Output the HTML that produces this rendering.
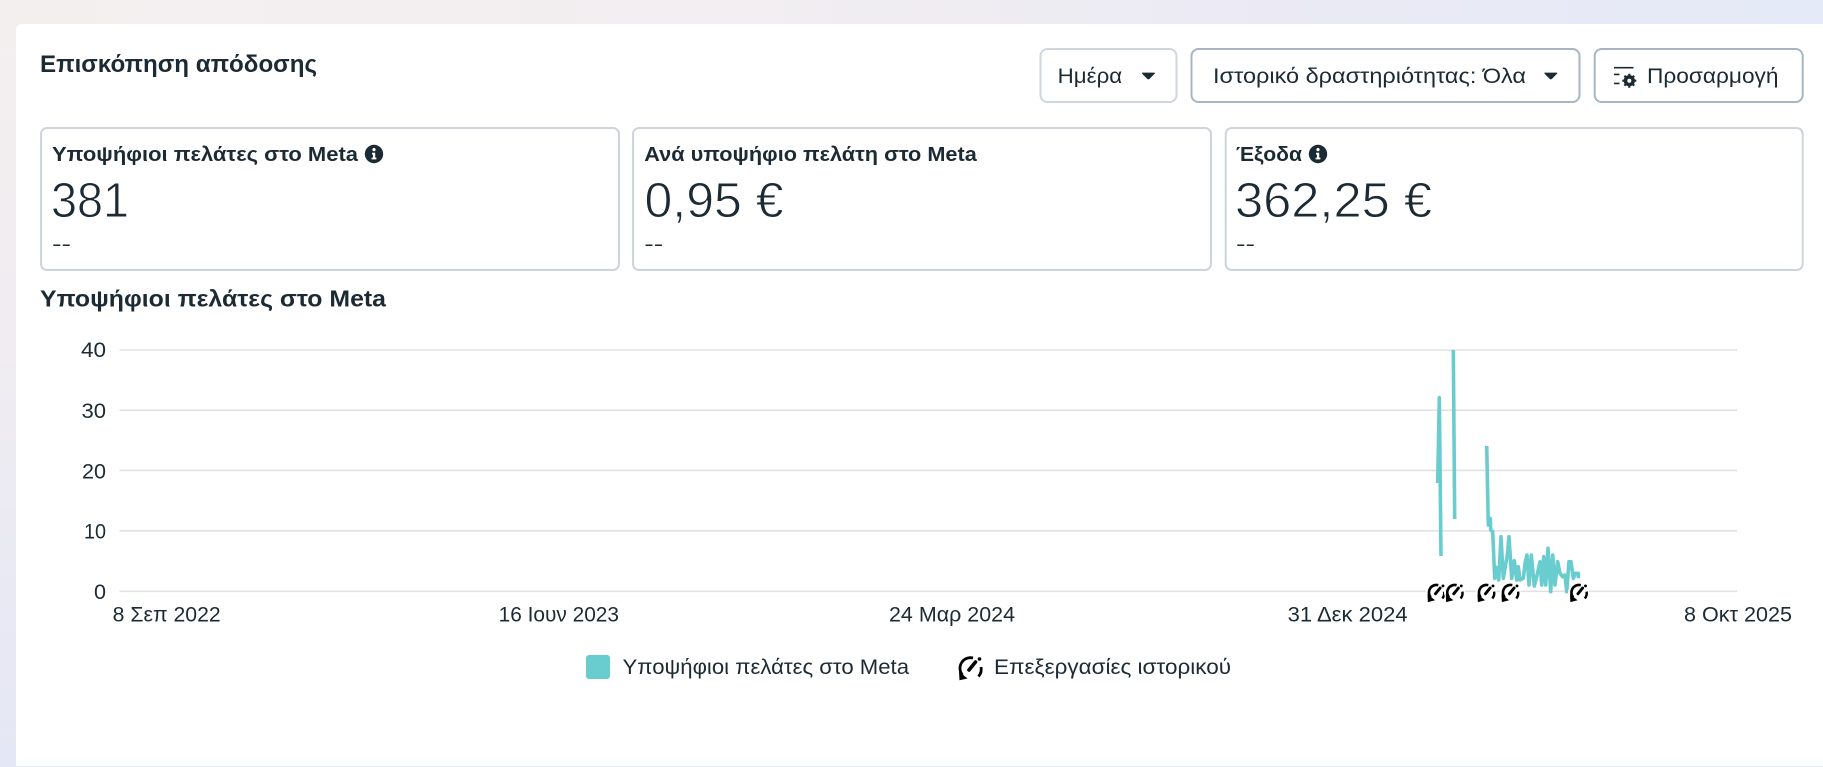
<!DOCTYPE html>
<html lang="el">
<head>
<meta charset="utf-8">
<title>Επισκόπηση απόδοσης</title>
<style>
html,body{margin:0;padding:0;width:1823px;height:767px;overflow:hidden;background:#fff}
svg{display:block}
text{font-family:"Liberation Sans","DejaVu Sans",sans-serif;fill:#1c2b33}
.b{font-weight:bold}
.lab{font-size:20px;font-weight:bold}
.val{font-size:49px;stroke:#fff;stroke-width:.9px}
.btn{font-size:21px}
.ax{font-size:21px}
.gr{stroke:#e0e2e5;stroke-width:1.6}
</style>
</head>
<body>
<svg width="1823" height="767" viewBox="0 0 1823 767" xmlns="http://www.w3.org/2000/svg">
<defs>
<linearGradient id="top" x1="0" y1="0" x2="1" y2="0">
<stop offset="0" stop-color="#f4efef"/><stop offset=".4" stop-color="#f2eef1"/><stop offset=".7" stop-color="#ebeaf4"/><stop offset="1" stop-color="#e4eaf7"/>
</linearGradient>
<linearGradient id="left" x1="0" y1="0" x2="0" y2="1">
<stop offset="0" stop-color="#f4efef"/><stop offset=".45" stop-color="#f0ecf1"/><stop offset="1" stop-color="#e4e7f5"/>
</linearGradient>
<g id="gauge" fill="none" stroke="#000">
<path d="M4.5 20A10.5 10.5 0 0 1 15 3" stroke-width="2.8"/>
<path d="M23 12A11 11 0 0 1 20.5 21.5" stroke-width="2.8"/>
<path d="M11 15L17.5 7" stroke-width="3.6" stroke-linecap="round"/>
<circle cx="21.5" cy="4" r="1.8" fill="#000" stroke="none"/>
<path d="M1 16.5L9.5 23.5L1.5 25.2Z" fill="#000" stroke="none"/>
</g>
<g id="mk" fill="none" stroke="#000">
<circle cx="12" cy="13" r="14.5" fill="#fff" stroke="none"/>
<path d="M4.5 20A10.5 10.5 0 0 1 15 3" stroke-width="3.6"/>
<path d="M23 12A11 11 0 0 1 20.5 21.5" stroke-width="3.4"/>
<path d="M11 15L17.5 7" stroke-width="4" stroke-linecap="round"/>
<circle cx="21.5" cy="4" r="2" fill="#000" stroke="none"/>
<path d="M0 15.5L10.5 24L0.5 26.5Z" fill="#000" stroke="none"/>
</g>
<g id="info">
<circle cx="0" cy="0" r="9.2" fill="#1c2b33"/>
<circle cx="0" cy="-4.4" r="1.6" fill="#fff"/>
<path d="M-2 -1.2H1.2V3.6H2.4V5.4H-2.4V3.6H-1V.6H-2Z" fill="#fff"/>
</g>
</defs>

<rect width="1823" height="767" fill="url(#top)"/>
<rect width="16" height="767" fill="url(#left)"/>
<path d="M16 767V30a6 6 0 0 1 6-6H1823V767Z" fill="#e5e9f2"/>
<path d="M16 766V30a6 6 0 0 1 6-6H1823V766Z" fill="#fff"/>

<text class="b" x="40" y="72" font-size="24" textLength="277" lengthAdjust="spacingAndGlyphs">Επισκόπηση απόδοσης</text>

<!-- Buttons -->
<rect x="1040.5" y="49" width="136" height="53" rx="7" fill="#fff" stroke="#d0d6de" stroke-width="2"/>
<text class="btn" x="1057.7" y="83" textLength="64.5" lengthAdjust="spacingAndGlyphs">Ημέρα</text>
<path d="M1142.6 72.6H1154.2Q1155.4 72.6 1154.6 73.8L1149.4 79Q1148.4 79.8 1147.4 79L1142.2 73.8Q1141.4 72.6 1142.6 72.6Z" fill="#1c2b33"/>

<rect x="1191.5" y="49" width="388" height="53" rx="7" fill="#fff" stroke="#a9b5c2" stroke-width="2"/>
<text class="btn" x="1213" y="83" textLength="313" lengthAdjust="spacingAndGlyphs">Ιστορικό δραστηριότητας: Όλα</text>
<path d="M1545 72.6H1556.6Q1557.8 72.6 1557 73.8L1551.8 79Q1550.8 79.8 1549.8 79L1544.6 73.8Q1543.8 72.6 1545 72.6Z" fill="#1c2b33"/>

<rect x="1594.7" y="49" width="208" height="53" rx="7" fill="#fff" stroke="#a9b5c2" stroke-width="2"/>
<g fill="none" stroke="#1c2b33" stroke-width="1.6">
<path d="M1614 67.7H1633.5M1614 74.4H1619.5M1614 83.4H1619.5"/>
<circle cx="1629.3" cy="80.7" r="4" stroke-width="3.2"/>
<path d="M1629.3 73.7V87.7M1622.3 80.7H1636.3M1624.4 75.8L1634.2 85.6M1634.2 75.8L1624.4 85.6" stroke-width="2.2"/>
</g>
<circle cx="1629.3" cy="80.7" r="2" fill="#fff"/>
<text class="btn" x="1647" y="83" textLength="131.5" lengthAdjust="spacingAndGlyphs">Προσαρμογή</text>

<!-- Metric cards -->
<rect x="41" y="128" width="578" height="142" rx="6" fill="#fff" stroke="#ced4dc" stroke-width="2"/>
<text class="lab" x="52" y="161" textLength="306" lengthAdjust="spacingAndGlyphs">Υποψήφιοι πελάτες στο Meta</text>
<use href="#info" x="374" y="154"/>
<text class="val" x="51" y="217" textLength="78" lengthAdjust="spacingAndGlyphs">381</text>
<text x="52" y="250.5" font-size="19" textLength="19" lengthAdjust="spacingAndGlyphs">--</text>

<rect x="633" y="128" width="578" height="142" rx="6" fill="#fff" stroke="#ced4dc" stroke-width="2"/>
<text class="lab" x="644.3" y="161" textLength="332.5" lengthAdjust="spacingAndGlyphs">Ανά υποψήφιο πελάτη στο Meta</text>
<text class="val" x="644.5" y="217" textLength="139" lengthAdjust="spacingAndGlyphs">0,95 €</text>
<text x="644.3" y="250.5" font-size="19" textLength="19" lengthAdjust="spacingAndGlyphs">--</text>

<rect x="1225.7" y="128" width="577" height="142" rx="6" fill="#fff" stroke="#ced4dc" stroke-width="2"/>
<text class="lab" x="1236" y="161" textLength="66" lengthAdjust="spacingAndGlyphs">Έξοδα</text>
<use href="#info" x="1318" y="154"/>
<text class="val" x="1235" y="217" textLength="197" lengthAdjust="spacingAndGlyphs">362,25 €</text>
<text x="1236" y="250.5" font-size="19" textLength="19" lengthAdjust="spacingAndGlyphs">--</text>

<!-- Chart -->
<text class="b" x="40" y="306.7" font-size="23" textLength="346" lengthAdjust="spacingAndGlyphs">Υποψήφιοι πελάτες στο Meta</text>

<path class="gr" d="M119.5 350H1737M119.5 410.2H1737M119.5 470.4H1737M119.5 530.8H1737M119.5 591.3H1737" fill="none"/>

<text class="ax" x="81" y="357.2" textLength="25" lengthAdjust="spacingAndGlyphs">40</text>
<text class="ax" x="81.5" y="418" textLength="24.5" lengthAdjust="spacingAndGlyphs">30</text>
<text class="ax" x="82" y="478.5" textLength="24" lengthAdjust="spacingAndGlyphs">20</text>
<text class="ax" x="84" y="538.5" textLength="22" lengthAdjust="spacingAndGlyphs">10</text>
<text class="ax" x="94" y="598.8" textLength="12" lengthAdjust="spacingAndGlyphs">0</text>

<text class="ax" x="112.7" y="621.7" textLength="108" lengthAdjust="spacingAndGlyphs">8 Σεπ 2022</text>
<text class="ax" x="498.6" y="621.7" textLength="120.4" lengthAdjust="spacingAndGlyphs">16 Ιουν 2023</text>
<text class="ax" x="889" y="621.7" textLength="126" lengthAdjust="spacingAndGlyphs">24 Μαρ 2024</text>
<text class="ax" x="1287.6" y="621.7" textLength="120" lengthAdjust="spacingAndGlyphs">31 Δεκ 2024</text>
<text class="ax" x="1684" y="621.7" textLength="108" lengthAdjust="spacingAndGlyphs">8 Οκτ 2025</text>

<g fill="none" stroke="#69cdcf" stroke-width="3.6" stroke-linejoin="round">
<polyline points="1437.7,483 1439.3,397.7 1441,556"/>
<polyline points="1453.3,350 1454.7,519"/>
<polyline points="1486.7,446 1488.3,525 1490.3,518.3 1490.7,530 1492.7,531.7 1494.7,578.3 1496,567.3 1498.7,580 1501,536.7 1503.3,578.3 1505.3,566.7 1507.3,555 1509,536.7 1511.7,578.3 1514.3,560.7 1516.7,580 1518.3,566.7 1520,580 1523.3,578.3 1525.3,561.7 1527,555 1529,585 1531.3,555 1534.3,586 1536.7,576.7 1540,561.7 1541.7,585 1543.7,556.7 1545.7,585 1548,548.3 1550.7,591.7 1552.7,555 1555,585 1557.7,561.7 1560,573.3 1562.7,576.7 1565,575 1566.7,591.7 1569,561.7 1571,561.7 1573.3,578.3 1575.3,573.3 1578.3,573.3 1578.3,578.3"/>
</g>

<!-- Chart gauge markers -->
<use href="#mk" transform="translate(1427.5,583) scale(.72)"/>
<use href="#mk" transform="translate(1445.8,583) scale(.72)"/>
<use href="#mk" transform="translate(1477.5,583) scale(.72)"/>
<use href="#mk" transform="translate(1501.5,583) scale(.72)"/>
<use href="#mk" transform="translate(1570,583) scale(.72)"/>

<!-- Legend -->
<rect x="586" y="655" width="24" height="24" rx="3" fill="#69cdcf"/>
<text class="ax" x="622.5" y="674" textLength="286.5" lengthAdjust="spacingAndGlyphs">Υποψήφιοι πελάτες στο Meta</text>
<use href="#gauge" x="958" y="655"/>
<text class="ax" x="994" y="674" textLength="237" lengthAdjust="spacingAndGlyphs">Επεξεργασίες ιστορικού</text>
</svg>
</body>
</html>
